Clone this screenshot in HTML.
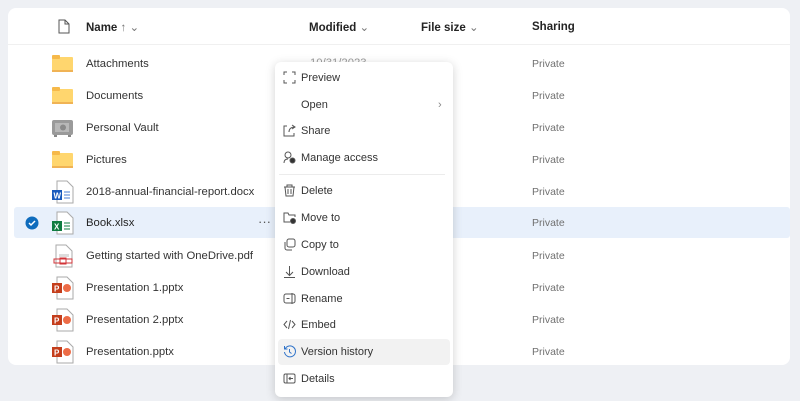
<!DOCTYPE html><html><head><style>
*{margin:0;padding:0;box-sizing:border-box}
body{width:800px;height:401px;background:#eef0f4;font-family:"Liberation Sans",sans-serif;position:relative;overflow:hidden;color:#242424}
.card{position:absolute;left:8px;top:8px;width:782px;height:357px;background:#fff;border-radius:8px}
.hdr{position:absolute;top:0;left:0;right:0;height:37px;border-bottom:1.5px solid #f0f0f0;font-size:11.5px;font-weight:bold}
.hdr span{position:absolute;top:12px}
.row{position:absolute;left:6px;width:776px;height:31px;font-size:11.3px}
.row .n{position:absolute;left:72px;top:10px;color:#333}
.row .p{position:absolute;left:518px;top:10px;color:#707070;font-size:10.5px}
.row .ic{position:absolute;left:38px;top:7px}
.sel{background:#e8f0fb}
.menu{position:absolute;left:275px;top:62px;width:178px;height:335px;background:#fff;border-radius:6px;box-shadow:0 2px 10px rgba(0,0,0,.18)}
.mi{position:absolute;left:3px;width:172px;height:26px;font-size:11px;color:#333}
.mi span{position:absolute;left:23px;top:7px}
.mi svg{position:absolute;left:5px;top:6px}
.hl{background:#f2f2f2;border-radius:4px}
.sep{position:absolute;left:4px;right:8px;top:112px;height:1px;background:#ececec}
</style></head><body>
<div class="card">
<div class="hdr">
<svg style="position:absolute;left:50px;top:11px" width="12" height="15" viewBox="0 0 12 15"><path d="M1 1h6l4 4v9H1z M7 1v4h4" fill="none" stroke="#555" stroke-width="1"/></svg>
<span style="left:78px">Name <span style="position:static;font-weight:normal;color:#777">↑ ⌄</span></span>
<span style="left:301px">Modified <span style="position:static;font-weight:normal;color:#777">⌄</span></span>
<span style="left:413px">File size <span style="position:static;font-weight:normal;color:#777">⌄</span></span>
<span style="left:524px;top:13px">Sharing</span>
</div>
</div>
<div style="position:absolute;left:8px;top:8px">
<div class="row" style="top:40px"><svg class="ic" width="22" height="18"><rect x="0" y="2" width="21" height="15" rx="1" fill="#ffd66e"/><rect x="0" y="0" width="8" height="4" rx="1" fill="#f6b94a"/><rect x="0" y="15" width="21" height="2" fill="#f0b355"/></svg><div class="n">Attachments</div><div class="p">Private</div><div style="position:absolute;left:296px;top:9px;color:#999">10/31/2023</div></div>
<div class="row" style="top:72px"><svg class="ic" width="22" height="18"><rect x="0" y="2" width="21" height="15" rx="1" fill="#ffd66e"/><rect x="0" y="0" width="8" height="4" rx="1" fill="#f6b94a"/><rect x="0" y="15" width="21" height="2" fill="#f0b355"/></svg><div class="n">Documents</div><div class="p">Private</div></div>
<div class="row" style="top:104px"><svg class="ic" width="22" height="18"><rect x="0" y="1" width="21" height="15" rx="2" fill="#9a9a9a"/><rect x="3" y="4" width="14" height="9" fill="#b8b8b8"/><circle cx="11" cy="8.5" r="3" fill="#8a8a8a"/><rect x="2" y="16" width="3" height="2" fill="#888"/><rect x="16" y="16" width="3" height="2" fill="#888"/></svg><div class="n">Personal Vault</div><div class="p">Private</div></div>
<div class="row" style="top:136px"><svg class="ic" width="22" height="18"><rect x="0" y="2" width="21" height="15" rx="1" fill="#ffd66e"/><rect x="0" y="0" width="8" height="4" rx="1" fill="#f6b94a"/><rect x="0" y="15" width="21" height="2" fill="#f0b355"/></svg><div class="n">Pictures</div><div class="p">Private</div></div>
<div class="row" style="top:168px"><svg class="ic" style="top:4px" width="22" height="24"><path d="M5 1h10l6 6v16H5z" fill="#fff" stroke="#aaa"/><rect x="0" y="10" width="10" height="10" fill="#185abd"/><text x="1.5" y="18.5" font-size="8" font-weight="bold" fill="#fff" font-family="Liberation Sans">W</text><path d="M12 12h6M12 15h6M12 18h6" stroke="#4a7fd4"/></svg><div class="n">2018-annual-financial-report.docx</div><div class="p">Private</div></div>
<div class="row sel" style="top:199px;height:31px;border-radius:3px"><svg style="position:absolute;left:11px;top:9px" width="14" height="14"><circle cx="7" cy="7" r="6.5" fill="#0f6cbd"/><path d="M4 7l2 2 4-4" stroke="#fff" stroke-width="1.5" fill="none"/></svg><svg class="ic" style="top:4px" width="22" height="24"><path d="M5 1h10l6 6v16H5z" fill="#fff" stroke="#aaa"/><rect x="0" y="10" width="10" height="10" fill="#107c41"/><text x="2" y="18.5" font-size="8" font-weight="bold" fill="#fff" font-family="Liberation Sans">X</text><path d="M12 12h6M12 15h6M12 18h6" stroke="#107c41"/></svg><div class="n" style="color:#242424">Book.xlsx</div><div style="position:absolute;left:244px;top:7px;color:#555;font-size:13px">···</div><div class="p">Private</div></div>
<div class="row" style="top:232px"><svg class="ic" style="top:4px" width="22" height="24"><path d="M4 1h10l6 6v16H4z" fill="#fff" stroke="#aaa"/><rect x="7" y="10" width="10" height="3" fill="#ddd"/><rect x="2" y="15" width="18" height="4" fill="none" stroke="#d13438"/><rect x="8" y="14" width="6" height="6" fill="none" stroke="#d13438"/></svg><div class="n">Getting started with OneDrive.pdf</div><div class="p">Private</div></div>
<div class="row" style="top:264px"><svg class="ic" style="top:4px" width="22" height="24"><path d="M5 1h10l6 6v16H5z" fill="#fff" stroke="#aaa"/><rect x="0" y="7" width="10" height="10" fill="#c43e1c"/><text x="2" y="15.5" font-size="8" font-weight="bold" fill="#fff" font-family="Liberation Sans">P</text><circle cx="15" cy="12" r="4" fill="#ed6c47"/></svg><div class="n">Presentation 1.pptx</div><div class="p">Private</div></div>
<div class="row" style="top:296px"><svg class="ic" style="top:4px" width="22" height="24"><path d="M5 1h10l6 6v16H5z" fill="#fff" stroke="#aaa"/><rect x="0" y="7" width="10" height="10" fill="#c43e1c"/><text x="2" y="15.5" font-size="8" font-weight="bold" fill="#fff" font-family="Liberation Sans">P</text><circle cx="15" cy="12" r="4" fill="#ed6c47"/></svg><div class="n">Presentation 2.pptx</div><div class="p">Private</div></div>
<div class="row" style="top:328px"><svg class="ic" style="top:4px" width="22" height="24"><path d="M5 1h10l6 6v16H5z" fill="#fff" stroke="#aaa"/><rect x="0" y="7" width="10" height="10" fill="#c43e1c"/><text x="2" y="15.5" font-size="8" font-weight="bold" fill="#fff" font-family="Liberation Sans">P</text><circle cx="15" cy="12" r="4" fill="#ed6c47"/></svg><div class="n">Presentation.pptx</div><div class="p">Private</div></div>
</div>
<div class="menu">
<div class="mi" style="top:3px"><svg width="13" height="13" fill="none" stroke="#555"><path d="M1 4V1h3M9 1h3v3M12 9v3H9M4 12H1V9"/></svg><span>Preview</span></div>
<div class="mi" style="top:30px"><span>Open</span><span style="left:160px;color:#888">›</span></div>
<div class="mi" style="top:56px"><svg width="13" height="13" fill="none" stroke="#555"><path d="M4 2H1v10h10V9M6 8c0-3 2-5 6-5M9 1l3 2-3 2"/></svg><span>Share</span></div>
<div class="mi" style="top:83px"><svg width="13" height="13" fill="none" stroke="#555"><circle cx="5" cy="4" r="3"/><path d="M1 12c0-3 2-4 4-4"/><circle cx="9.5" cy="9.5" r="2.5" fill="#333"/></svg><span>Manage access</span></div>
<div class="sep"></div>
<div class="mi" style="top:116px"><svg width="13" height="13" fill="none" stroke="#555"><path d="M1 3h11M4 3V1h5v2M2 3l1 9h7l1-9M5 5v5M8 5v5"/></svg><span>Delete</span></div>
<div class="mi" style="top:143px"><svg width="13" height="13" fill="none" stroke="#555"><path d="M7 11H1V2h4l1 2h6v2"/><circle cx="10" cy="10" r="2.5" fill="#333"/></svg><span>Move to</span></div>
<div class="mi" style="top:170px"><svg width="13" height="13" fill="none" stroke="#555"><rect x="4" y="1" width="8" height="8" rx="2"/><path d="M2 4v6a2 2 0 002 2h5"/></svg><span>Copy to</span></div>
<div class="mi" style="top:197px"><svg width="13" height="13" fill="none" stroke="#555"><path d="M6.5 1v9M3 7l3.5 3.5L10 7M1 12.5h11"/></svg><span>Download</span></div>
<div class="mi" style="top:224px"><svg width="13" height="13" fill="none" stroke="#555"><rect x="1" y="2" width="11" height="9" rx="2"/><path d="M9 1v11M3.5 6.5h3"/></svg><span>Rename</span></div>
<div class="mi" style="top:250px"><svg width="13" height="13" fill="none" stroke="#555"><path d="M4 3L1 6.5 4 10M9 3l3 3.5L9 10M7.5 2l-2 9"/></svg><span>Embed</span></div>
<div class="mi hl" style="top:277px"><svg width="13" height="13" fill="none" stroke="#2f73c9"><path d="M2 4a5.5 5.5 0 11-.5 3M1.5 1v3h3M6.5 4v3l2 1.5"/></svg><span>Version history</span></div>
<div class="mi" style="top:304px"><svg width="13" height="13" fill="none" stroke="#555"><rect x="1" y="2" width="11" height="9" rx="1.5"/><path d="M4 2v9M10 6.5H6M7.5 5L6 6.5 7.5 8"/></svg><span>Details</span></div>
</div>
</body></html>
